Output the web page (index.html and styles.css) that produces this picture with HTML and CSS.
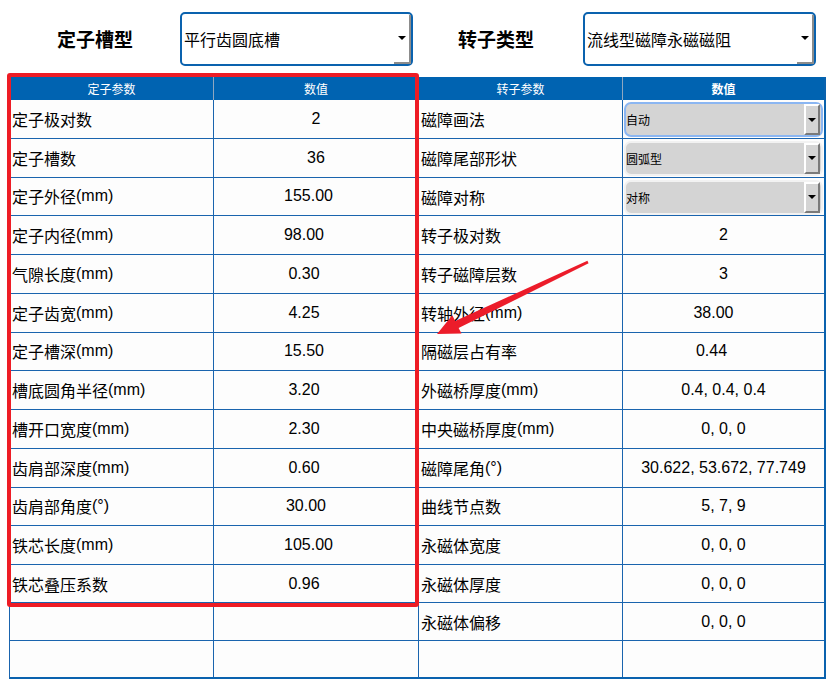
FILE: index.html
```html
<!DOCTYPE html>
<html lang="zh">
<head>
<meta charset="utf-8">
<title>电机参数</title>
<link rel="stylesheet" href="styles.css">
</head>
<body>
<div class="page">
  <div class="topbar">
    <div class="half half-left">
      <div class="label">定子槽型</div>
      <div class="combo"><span class="combo-text">平行齿圆底槽</span><span class="combo-btn"><span class="tri"></span></span></div>
    </div>
    <div class="half half-right">
      <div class="label">转子类型</div>
      <div class="combo"><span class="combo-text">流线型磁障永磁磁阻</span><span class="combo-btn"><span class="tri"></span></span></div>
    </div>
  </div>
  <div class="tables">
    <div class="tbl tbl-left">
      <div class="hrow"><div class="hc">定子参数</div><div class="hc">数值</div></div>
      <div class="row"><div class="c name">定子极对数</div><div class="c val">2</div></div>
      <div class="row"><div class="c name">定子槽数</div><div class="c val">36</div></div>
      <div class="row"><div class="c name">定子外径<span class="num">(mm)</span></div><div class="c val p15">155.00</div></div>
      <div class="row"><div class="c name">定子内径<span class="num">(mm)</span></div><div class="c val p24">98.00</div></div>
      <div class="row"><div class="c name">气隙长度<span class="num">(mm)</span></div><div class="c val p24">0.30</div></div>
      <div class="row"><div class="c name">定子齿宽<span class="num">(mm)</span></div><div class="c val p24">4.25</div></div>
      <div class="row"><div class="c name">定子槽深<span class="num">(mm)</span></div><div class="c val p24">15.50</div></div>
      <div class="row"><div class="c name">槽底圆角半径<span class="num">(mm)</span></div><div class="c val p24">3.20</div></div>
      <div class="row"><div class="c name">槽开口宽度<span class="num">(mm)</span></div><div class="c val p24">2.30</div></div>
      <div class="row"><div class="c name">齿肩部深度<span class="num">(mm)</span></div><div class="c val p24">0.60</div></div>
      <div class="row"><div class="c name">齿肩部角度<span class="num">(°)</span></div><div class="c val p20">30.00</div></div>
      <div class="row"><div class="c name">铁芯长度<span class="num">(mm)</span></div><div class="c val p15">105.00</div></div>
      <div class="row short"><div class="c name">铁芯叠压系数</div><div class="c val p24">0.96</div></div>
      <div class="row short"><div class="c name"></div><div class="c val"></div></div>
      <div class="row short last"><div class="c name"></div><div class="c val"></div></div>
    </div>
    <div class="tbl tbl-right">
      <div class="hrow"><div class="hc">转子参数</div><div class="hc bold">数值</div></div>
      <div class="row"><div class="c name">磁障画法</div><div class="c sel"><div class="cell-combo focus"><span class="cc-text">自动</span><span class="cc-btn"><span class="tri small"></span></span></div></div></div>
      <div class="row"><div class="c name">磁障尾部形状</div><div class="c sel"><div class="cell-combo"><span class="cc-text">圆弧型</span><span class="cc-btn"><span class="tri small"></span></span></div></div></div>
      <div class="row"><div class="c name">磁障对称</div><div class="c sel"><div class="cell-combo"><span class="cc-text">对称</span><span class="cc-btn"><span class="tri small"></span></span></div></div></div>
      <div class="row"><div class="c name">转子极对数</div><div class="c val">2</div></div>
      <div class="row"><div class="c name">转子磁障层数</div><div class="c val">3</div></div>
      <div class="row"><div class="c name">转轴外径<span class="num">(mm)</span></div><div class="c val p20">38.00</div></div>
      <div class="row"><div class="c name">隔磁层占有率</div><div class="c val p24">0.44</div></div>
      <div class="row"><div class="c name">外磁桥厚度<span class="num">(mm)</span></div><div class="c val">0.4, 0.4, 0.4</div></div>
      <div class="row"><div class="c name">中央磁桥厚度<span class="num">(mm)</span></div><div class="c val">0, 0, 0</div></div>
      <div class="row"><div class="c name">磁障尾角<span class="num">(°)</span></div><div class="c val">30.622, 53.672, 77.749</div></div>
      <div class="row"><div class="c name">曲线节点数</div><div class="c val">5, 7, 9</div></div>
      <div class="row"><div class="c name">永磁体宽度</div><div class="c val">0, 0, 0</div></div>
      <div class="row short"><div class="c name">永磁体厚度</div><div class="c val">0, 0, 0</div></div>
      <div class="row short"><div class="c name">永磁体偏移</div><div class="c val">0, 0, 0</div></div>
      <div class="row short last"><div class="c name"></div><div class="c val"></div></div>
    </div>
  </div>
  <div class="redbox"></div>
  <svg class="arrow" width="835" height="687" viewBox="0 0 835 687">
    <polygon points="437,334 461.5,333.5 458.6,328.1 588.6,263.2 587.4,260.8 455.2,320.9 452.3,315.3" fill="#ec1c2a"/>
  </svg>
</div>
</body>
</html>
```
FILE: styles.css
```css
html, body {
  margin: 0;
  padding: 0;
  background: #ffffff;
}
body {
  font-family: "Noto Sans CJK SC", "Liberation Sans", sans-serif;
  color: #000;
}
.page {
  position: relative;
  width: 835px;
  height: 687px;
  overflow: hidden;
}
.topbar {
  height: 77px;
  display: flex;
}
.half {
  display: flex;
  align-items: flex-start;
  box-sizing: border-box;
  padding-top: 12px;
}
.half-left {
  width: 419px;
  padding-left: 57px;
}
.half-right {
  width: 416px;
  padding-left: 39px;
}
.label {
  font-size: 19px;
  font-weight: bold;
  line-height: 54px;
  height: 54px;
  width: 123px;
  white-space: nowrap;
}
.half-right .label { width: 125px; }
.combo {
  width: 233px;
  height: 54px;
  box-sizing: border-box;
  border: 2px solid #0a62ae;
  border-radius: 5px;
  background: #fff;
  display: flex;
  align-items: stretch;
}
.combo-text {
  flex: 1;
  font-size: 16px;
  line-height: 50px;
  padding-left: 2px;
  white-space: nowrap;
}
.combo-btn {
  width: 15px;
  margin: 1px 0 0 0;
  border-right: 2px solid #8c8c8c;
  border-bottom: 2px solid #8c8c8c;
  display: flex;
  align-items: center;
  justify-content: center;
}
.tri {
  width: 0;
  height: 0;
  border-left: 4px solid transparent;
  border-right: 4px solid transparent;
  border-top: 4px solid #000;
  margin-bottom: 2px;
}
.tri.small {
  margin: 0;
}
.tables {
  display: flex;
  margin-left: 9px;
}
.tbl {
  box-sizing: border-box;
  border-bottom: 2px solid #0a62ae;
}
.tbl-left {
  width: 410px;
  border-left: 1px solid #1a64ae;
  border-right: 1px solid #1a64ae;
}
.tbl-right {
  width: 407px;
  border-right: 2px solid #0a62ae;
}
.tbl-left .hrow, .tbl-left .row {
  display: grid;
  grid-template-columns: 203px 205px;
}
.tbl-right .hrow, .tbl-right .row {
  display: grid;
  grid-template-columns: 203px 202px;
}
.hrow {
  height: 23px;
  background: #0063b1;
  box-sizing: border-box;
}
.hc {
  color: #fff;
  font-size: 12px;
  line-height: 23px;
  text-align: center;
}
.hc + .hc {
  border-left: 1px solid #8fa7c0;
}
.hc.bold { font-weight: bold; }
.row {
  height: 38.75px;
  box-sizing: border-box;
  border-bottom: 1px solid #1a64ae;
  background: #fdfdfd;
}
.row.short {
  height: 38px;
}
.row.last {
  height: 36px;
  border-bottom: none;
}
.c {
  display: flex;
  align-items: center;
  box-sizing: border-box;
  white-space: nowrap;
}
.c + .c {
  border-left: 1px solid #1a64ae;
}
.name {
  font-size: 16px;
  padding-left: 2px;
}
.num {
  font-family: "Liberation Sans", sans-serif;
  font-size: 16px;
}
.val {
  justify-content: center;
  font-family: "Liberation Sans", sans-serif;
  font-size: 16px;
}
.val.p15 { padding-right: 15px; }
.val.p20 { padding-right: 20px; }
.val.p24 { padding-right: 24px; }
.sel {
  padding: 2px 1px 1px 1px;
}
.cell-combo {
  flex: 1;
  height: 35px;
  box-sizing: border-box;
  background: #d4d4d4;
  border: 2px solid #f2f2f2;
  border-radius: 7px;
  display: flex;
  align-items: center;
}
.cell-combo.focus {
  border-color: #8bb6f2;
}
.cc-text {
  flex: 1;
  font-size: 12px;
}
.cc-btn {
  width: 12px;
  height: 27px;
  margin-right: 1px;
  background: #d4d4d4;
  border-left: 2px solid #ffffff;
  border-top: 2px solid #ffffff;
  border-right: 2px solid #7a7a7a;
  border-bottom: 2px solid #7a7a7a;
  display: flex;
  align-items: center;
  justify-content: center;
}
.redbox {
  position: absolute;
  left: 7px;
  top: 73px;
  width: 412px;
  height: 534px;
  box-sizing: border-box;
  border: 4px solid #ee1c25;
  border-radius: 3px;
}
.arrow {
  position: absolute;
  left: 0;
  top: 0;
  pointer-events: none;
}
```
